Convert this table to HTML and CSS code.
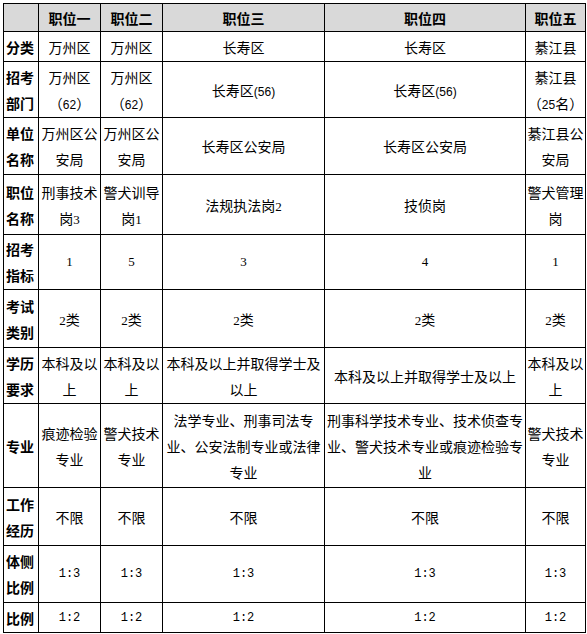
FILE: index.html
```html
<!DOCTYPE html>
<html lang="zh-CN">
<head>
<meta charset="utf-8">
<title>职位表</title>
<link rel="stylesheet" href="styles.css">
</head>
<body>
<table class="grid">
  <colgroup>
    <col class="c0"><col class="c1"><col class="c2"><col class="c3"><col class="c4"><col class="c5">
  </colgroup>
  <tr class="r28">
    <th></th><th>职位一</th><th>职位二</th><th>职位三</th><th>职位四</th><th>职位五</th>
  </tr>
  <tr class="r30">
    <td class="lbl">分类</td><td>万州区</td><td>万州区</td><td>长寿区</td><td>长寿区</td><td>綦江县</td>
  </tr>
  <tr class="r56">
    <td class="lbl">招考部门</td><td>万州区<br>（<span class="num">62</span>）</td><td>万州区<br>（<span class="num">62</span>）</td><td>长寿区<span class="sans">(56)</span></td><td>长寿区<span class="sans">(56)</span></td><td>綦江县<br>（<span class="num">25</span>名）</td>
  </tr>
  <tr class="r57">
    <td class="lbl">单位名称</td><td>万州区公安局</td><td>万州区公安局</td><td>长寿区公安局</td><td>长寿区公安局</td><td>綦江县公安局</td>
  </tr>
  <tr class="r60">
    <td class="lbl">职位名称</td><td>刑事技术<br>岗<span class="serif">3</span></td><td>警犬训导<br>岗<span class="serif">1</span></td><td>法规执法岗<span class="serif">2</span></td><td>技侦岗</td><td>警犬管理岗</td>
  </tr>
  <tr class="r55">
    <td class="lbl">招考指标</td><td class="serif">1</td><td class="serif">5</td><td class="serif">3</td><td class="serif">4</td><td class="serif">1</td>
  </tr>
  <tr class="r58">
    <td class="lbl">考试类别</td><td><span class="serif">2</span>类</td><td><span class="serif">2</span>类</td><td><span class="serif">2</span>类</td><td><span class="serif">2</span>类</td><td><span class="serif">2</span>类</td>
  </tr>
  <tr class="r56">
    <td class="lbl">学历要求</td><td>本科及以上</td><td>本科及以上</td><td>本科及以上并取得学士及以上</td><td>本科及以上并取得学士及以上</td><td>本科及以上</td>
  </tr>
  <tr class="r84">
    <td class="lbl">专业</td><td>痕迹检验专业</td><td>警犬技术专业</td><td>法学专业、刑事司法专业、公安法制专业或法律专业</td><td>刑事科学技术专业、技术侦查专业、警犬技术专业或痕迹检验专业</td><td>警犬技术专业</td>
  </tr>
  <tr class="r58">
    <td class="lbl">工作经历</td><td>不限</td><td>不限</td><td>不限</td><td>不限</td><td>不限</td>
  </tr>
  <tr class="r57">
    <td class="lbl">体侧比例</td><td class="mono">1:3</td><td class="mono">1:3</td><td class="mono">1:3</td><td class="mono">1:3</td><td class="mono">1:3</td>
  </tr>
  <tr class="r30">
    <td class="lbl">比例</td><td class="mono">1:2</td><td class="mono">1:2</td><td class="mono">1:2</td><td class="mono">1:2</td><td class="mono">1:2</td>
  </tr>
</table>
</body>
</html>
```
FILE: styles.css
```css
html, body {
  margin: 0;
  padding: 0;
  background: #ffffff;
}
body {
  padding: 3px 0 0 3px;
  font-family: "Noto Sans CJK SC", "Noto Sans", sans-serif;
  font-size: 14px;
  color: #000;
}
.grid {
  border-collapse: collapse;
  table-layout: fixed;
  width: 582px;
}
.c0 { width: 35px; }
.c1 { width: 62px; }
.c2 { width: 62px; }
.c3 { width: 162px; }
.c4 { width: 201px; }
.c5 { width: 60px; }
.grid th, .grid td {
  border: 1px solid #000;
  padding: 0 1px;
  text-align: center;
  vertical-align: middle;
  line-height: 26px;
  font-weight: normal;
  overflow: hidden;
  word-break: break-all;
}
.grid th {
  background: #d9d9d9;
  font-weight: bold;
  font-size: 14px;
  line-height: 24px;
}
.grid td.lbl {
  font-weight: bold;
  padding: 0 0 0 2px;
  text-align: left;
}
.r28 { height: 28px; }
.r30 { height: 30px; }
.r55 { height: 55px; }
.r56 { height: 56px; }
.r57 { height: 57px; }
.r58 { height: 58px; }
.r60 { height: 60px; }
.r84 { height: 84px; }
.serif, .num, .sans {
  line-height: 1;
  vertical-align: baseline;
}
.serif {
  font-family: "Liberation Serif", serif;
  font-size: 13px;
}
.num {
  font-family: "Liberation Sans", sans-serif;
  font-size: 12px;
}
.sans {
  font-family: "Liberation Sans", sans-serif;
  font-size: 12px;
}
.mono {
  font-family: "Liberation Mono", monospace;
  font-size: 12px;
}
```
